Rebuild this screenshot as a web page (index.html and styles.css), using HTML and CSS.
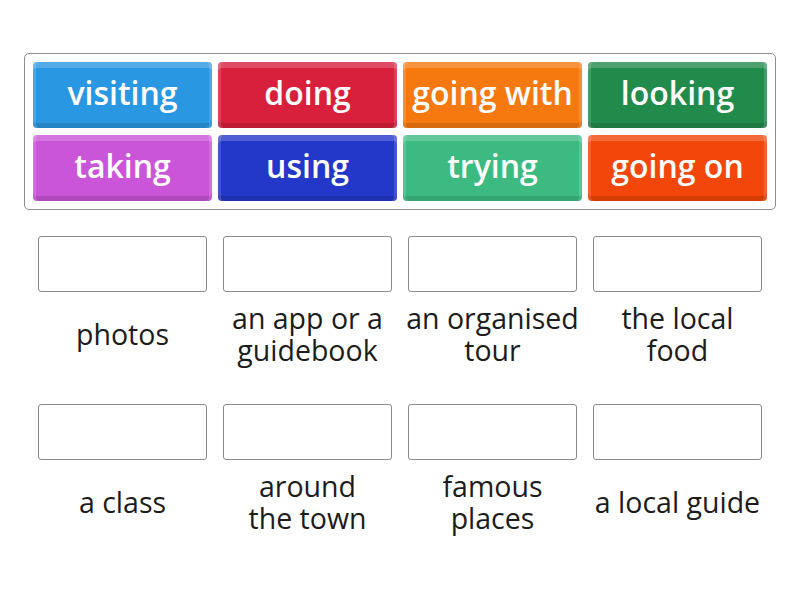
FILE: index.html
```html
<!DOCTYPE html>
<html>
<head>
<meta charset="utf-8">
<link rel="stylesheet" href="styles.css">
</head>
<body>
<div class="page">
  <div class="bank">
    <div class="tile blue">visiting</div>
    <div class="tile red">doing</div>
    <div class="tile orange">going with</div>
    <div class="tile green">looking</div>
    <div class="tile purple">taking</div>
    <div class="tile navy">using</div>
    <div class="tile teal">trying</div>
    <div class="tile flame">going on</div>
  </div>
  <div class="targets">
    <div class="cell"><div class="slot"></div><div class="label">photos</div></div>
    <div class="cell"><div class="slot"></div><div class="label">an app or a<br>guidebook</div></div>
    <div class="cell"><div class="slot"></div><div class="label">an organised<br>tour</div></div>
    <div class="cell"><div class="slot"></div><div class="label">the local<br>food</div></div>
    <div class="cell"><div class="slot"></div><div class="label">a class</div></div>
    <div class="cell"><div class="slot"></div><div class="label">around<br>the town</div></div>
    <div class="cell"><div class="slot"></div><div class="label">famous<br>places</div></div>
    <div class="cell"><div class="slot"></div><div class="label">a local guide</div></div>
  </div>
</div>
</body>
</html>
```
FILE: styles.css
```css
html, body {
  margin: 0;
  padding: 0;
  background: #fff;
}
body {
  font-family: "Open Sans", Lato, sans-serif;
  font-variant-ligatures: none;
}
.page {
  width: 800px;
  height: 600px;
  padding-top: 53px;
  box-sizing: border-box;
}
.bank {
  margin: 0 24px;
  width: 752px;
  height: 157px;
  box-sizing: border-box;
  border: 1px solid #8e8e8e;
  border-radius: 5px;
  padding: 8px 8px 0 8px;
  display: grid;
  grid-template-columns: repeat(4, 179px);
  grid-template-rows: 66px 66px;
  column-gap: 6px;
  row-gap: 7px;
}
.tile {
  border-radius: 4px;
  color: #fff;
  font-size: 32px;
  font-weight: 600;
  white-space: nowrap;
  display: flex;
  align-items: center;
  justify-content: center;
  padding-bottom: 6px;
  box-sizing: border-box;
  box-shadow: inset 0 6px 0 rgba(255,255,255,0.2), inset 3px 0 0 rgba(255,255,255,0.15), inset -3px 0 0 rgba(255,255,255,0.15), inset 0 -5px 0 rgba(0,0,0,0.12);
}
.blue { background: #2a97e2; }
.red { background: #d81f3b; }
.orange { background: #f5790f; }
.green { background: #218b4b; }
.purple { background: #ca55d8; }
.navy { background: #2337c9; }
.teal { background: #3dba82; }
.flame { background: #f2460a; }

.targets {
  margin: 26px 30px 0 30px;
  display: grid;
  grid-template-columns: repeat(4, 185px);
  grid-auto-rows: 168px;
}
.cell {
  display: flex;
  flex-direction: column;
  align-items: center;
}
.slot {
  width: 169px;
  height: 56px;
  box-sizing: border-box;
  border: 1px solid #8a8a8a;
  border-radius: 3px;
}
.label {
  margin-top: 10px;
  height: 64px;
  width: 185px;
  display: flex;
  align-items: center;
  justify-content: center;
  text-align: center;
  white-space: nowrap;
  font-size: 28.5px;
  line-height: 32px;
  color: #1c1c1c;
}
```
